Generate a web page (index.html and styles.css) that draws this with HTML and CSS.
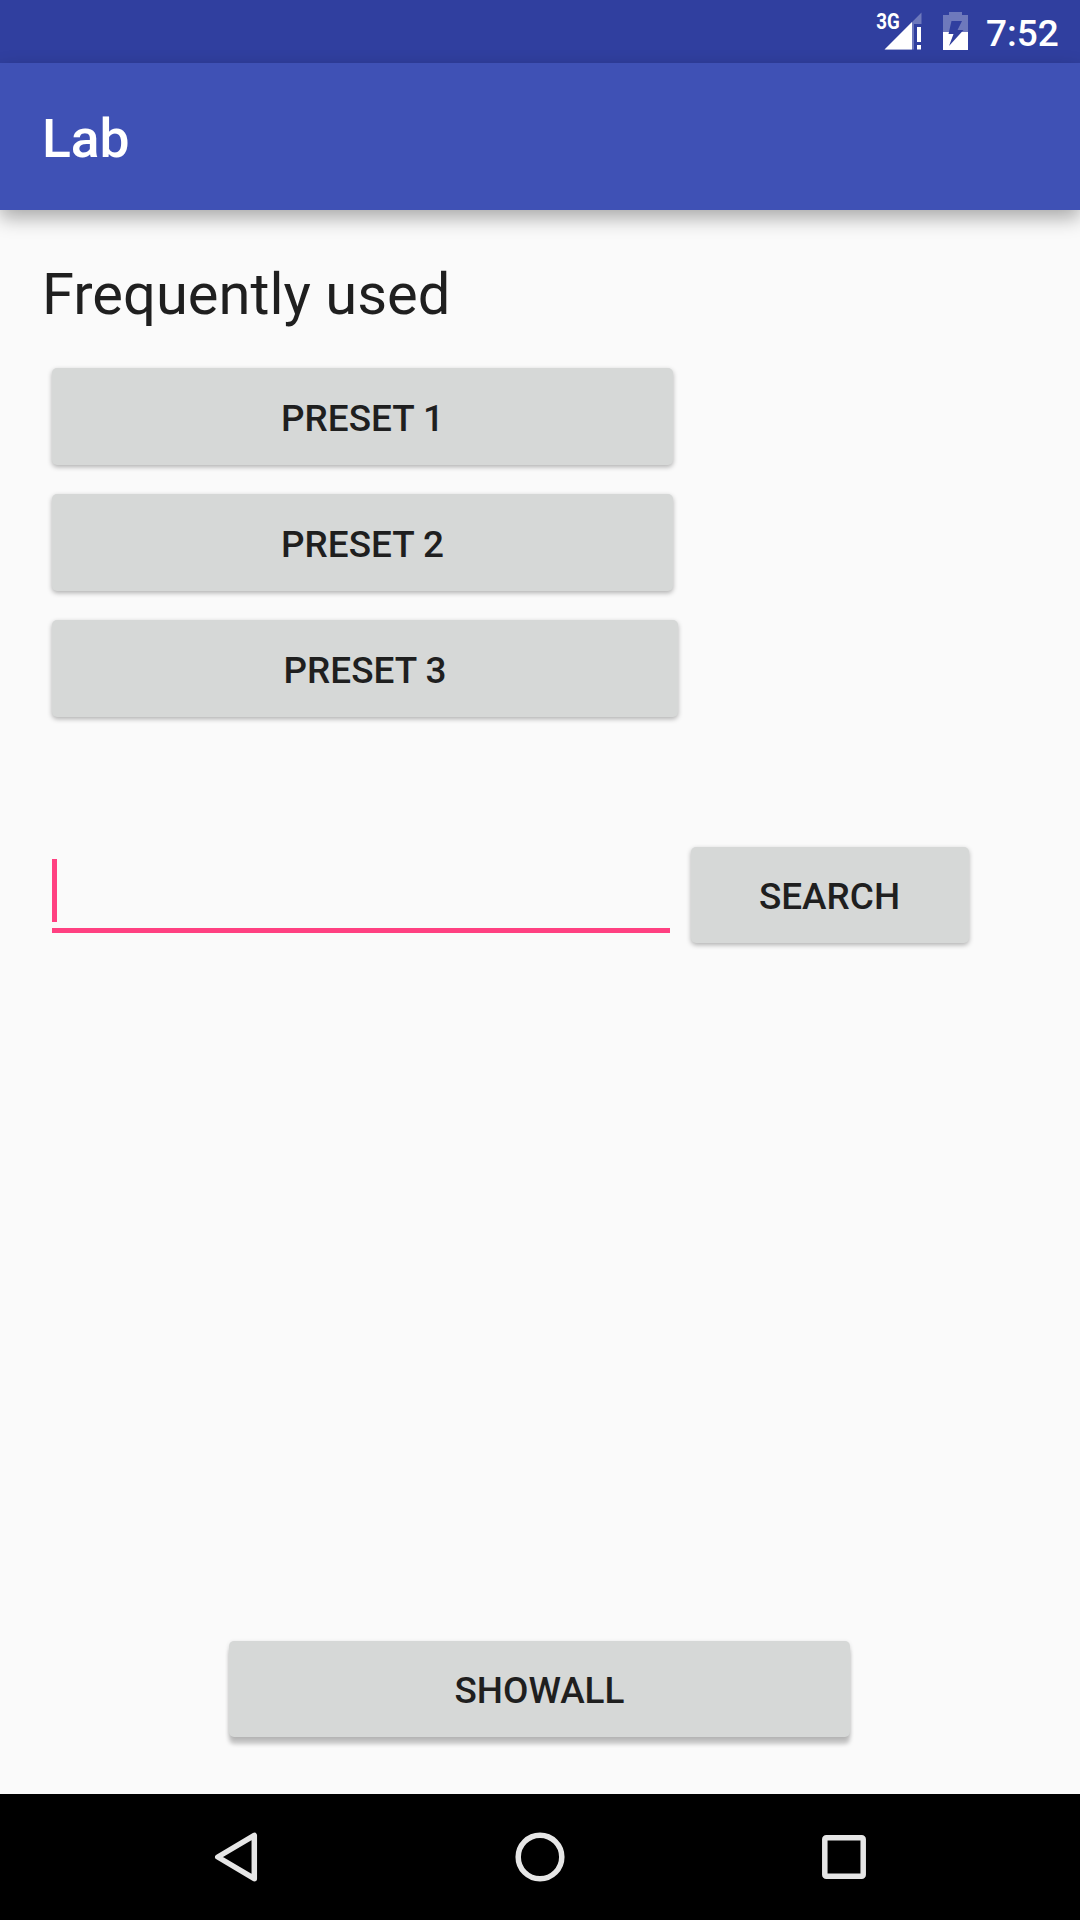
FILE: index.html
```html
<!DOCTYPE html>
<html lang="en">
<head>
<meta charset="utf-8">
<title>Lab</title>
<link rel="stylesheet" href="styles.css">
</head>
<body>
<div class="screen">
  <div class="status-bar">
    <svg class="signal" width="50" height="63" viewBox="874 0 50 63">
      <path d="M921.5 12.5V24H914V49.5H885Z" fill="#fff" fill-opacity=".3"/>
      <path d="M912 22V49.5H884.5Z" fill="#fff"/>
      <path d="M917 27h4v15h-4zM917 45h4v4.500h-4z" fill="#fff"/>
      <text class="network" x="876.200" y="29" textLength="23.500" lengthAdjust="spacingAndGlyphs">3G</text>
    </svg>
    <svg class="battery" width="26" height="63" viewBox="943 0 26 63">
      <path d="M949 12h13v3h6v17h-25V15h6z" fill="#fff" fill-opacity=".3"/>
      <path d="M943 32h25v18h-25z" fill="#fff"/>
      <path d="M951.500 21H962L957.500 30H963.500L949 46L953.500 34H948.500Z" fill="#303f9f"/>
    </svg>
    <span class="clock">7:52</span>
  </div>
  <header class="app-bar"><h1 class="title">Lab</h1></header>
  <main class="content">
    <h2 class="heading">Frequently used</h2>
    <div class="presets">
      <button class="button">Preset 1</button>
      <button class="button">Preset 2</button>
      <button class="button button-wide">Preset 3</button>
    </div>
    <div class="search">
      <div class="field"><span class="caret"></span></div>
      <button class="button button-search">Search</button>
    </div>
    <button class="button button-all">ShowAll</button>
  </main>
  <nav class="nav-bar">
    <svg width="304" height="126" viewBox="84 1794 304 126"><path d="M254.300 1835.300V1878.700L217.800 1857Z"/></svg>
    <svg width="304" height="126" viewBox="388 1794 304 126"><circle cx="540" cy="1857" r="21.800"/></svg>
    <svg width="304" height="126" viewBox="692 1794 304 126"><rect x="824.800" y="1837.800" width="38.400" height="38.400" rx="1.500"/></svg>
  </nav>
</div>
</body>
</html>
```
FILE: styles.css
```css
* { box-sizing: border-box; }

body {
  margin: 0;
  font-family: Roboto, sans-serif;
  color: #1f1f1f;
}

.screen {
  width: 1080px;
  height: 1920px;
  display: flex;
  flex-direction: column;
  background: #fafafa;
  overflow: hidden;
}

.status-bar {
  height: 63px;
  flex: none;
  display: flex;
  justify-content: flex-end;
  padding-right: 21px;
  background: #303f9f;
}

.signal { margin-right: 19px; }
.battery { margin-right: 17px; }

.network {
  font-size: 22.5px;
  font-weight: 700;
  fill: #fff;
}

.clock {
  width: 73px;
  font-size: 37px;
  font-weight: 500;
  line-height: 67px;
  color: #fff;
}

.app-bar {
  height: 147px;
  flex: none;
  display: flex;
  align-items: center;
  padding: 5px 42px 0;
  background: #3f51b5;
  box-shadow: 0 8px 18px rgba(0, 0, 0, .32);
}

.title {
  margin: 0;
  font-size: 53.4px;
  font-weight: 500;
  line-height: 62px;
  color: #fff;
}

.content {
  flex: 1;
  display: flex;
  flex-direction: column;
  align-items: flex-start;
  padding: 50px 52px 57px;
}

.heading {
  margin: 0 0 0 -10px;
  font-size: 57.9px;
  font-weight: 400;
  line-height: 68px;
}

.presets {
  display: flex;
  flex-direction: column;
  gap: 29px;
  margin-top: 40px;
}

.button {
  width: 621px;
  height: 97px;
  padding: 3px 0 0;
  border: 0;
  border-radius: 5px;
  background: #d6d8d7;
  box-shadow: 0 2px 5px rgba(0, 0, 0, .3);
  font: 500 36.9px/43px Roboto, sans-serif;
  color: #1f1f1f;
  text-transform: uppercase;
}

.button-wide { width: 626px; }

.search {
  display: flex;
  gap: 20.5px;
  margin-top: 130px;
}

.field {
  width: 618px;
  height: 86px;
  padding-top: 12px;
  border-bottom: 5px solid #ff4081;
}

.caret {
  display: block;
  width: 5px;
  height: 63px;
  background: #ff4081;
}

.button-search {
  width: 278px;
  height: 96px;
}

.button-all {
  height: 96px;
  margin: auto 1px 0 0;
  align-self: center;
  box-shadow: 0 7px 4px rgba(0, 0, 0, .22), 0 1px 4px rgba(0, 0, 0, .12);
}

.nav-bar {
  height: 126px;
  flex: none;
  display: flex;
  justify-content: center;
  background: #000;
}

.nav-bar svg {
  fill: none;
  stroke: #e6e6e6;
  stroke-width: 5.5px;
  stroke-linejoin: round;
}
```
